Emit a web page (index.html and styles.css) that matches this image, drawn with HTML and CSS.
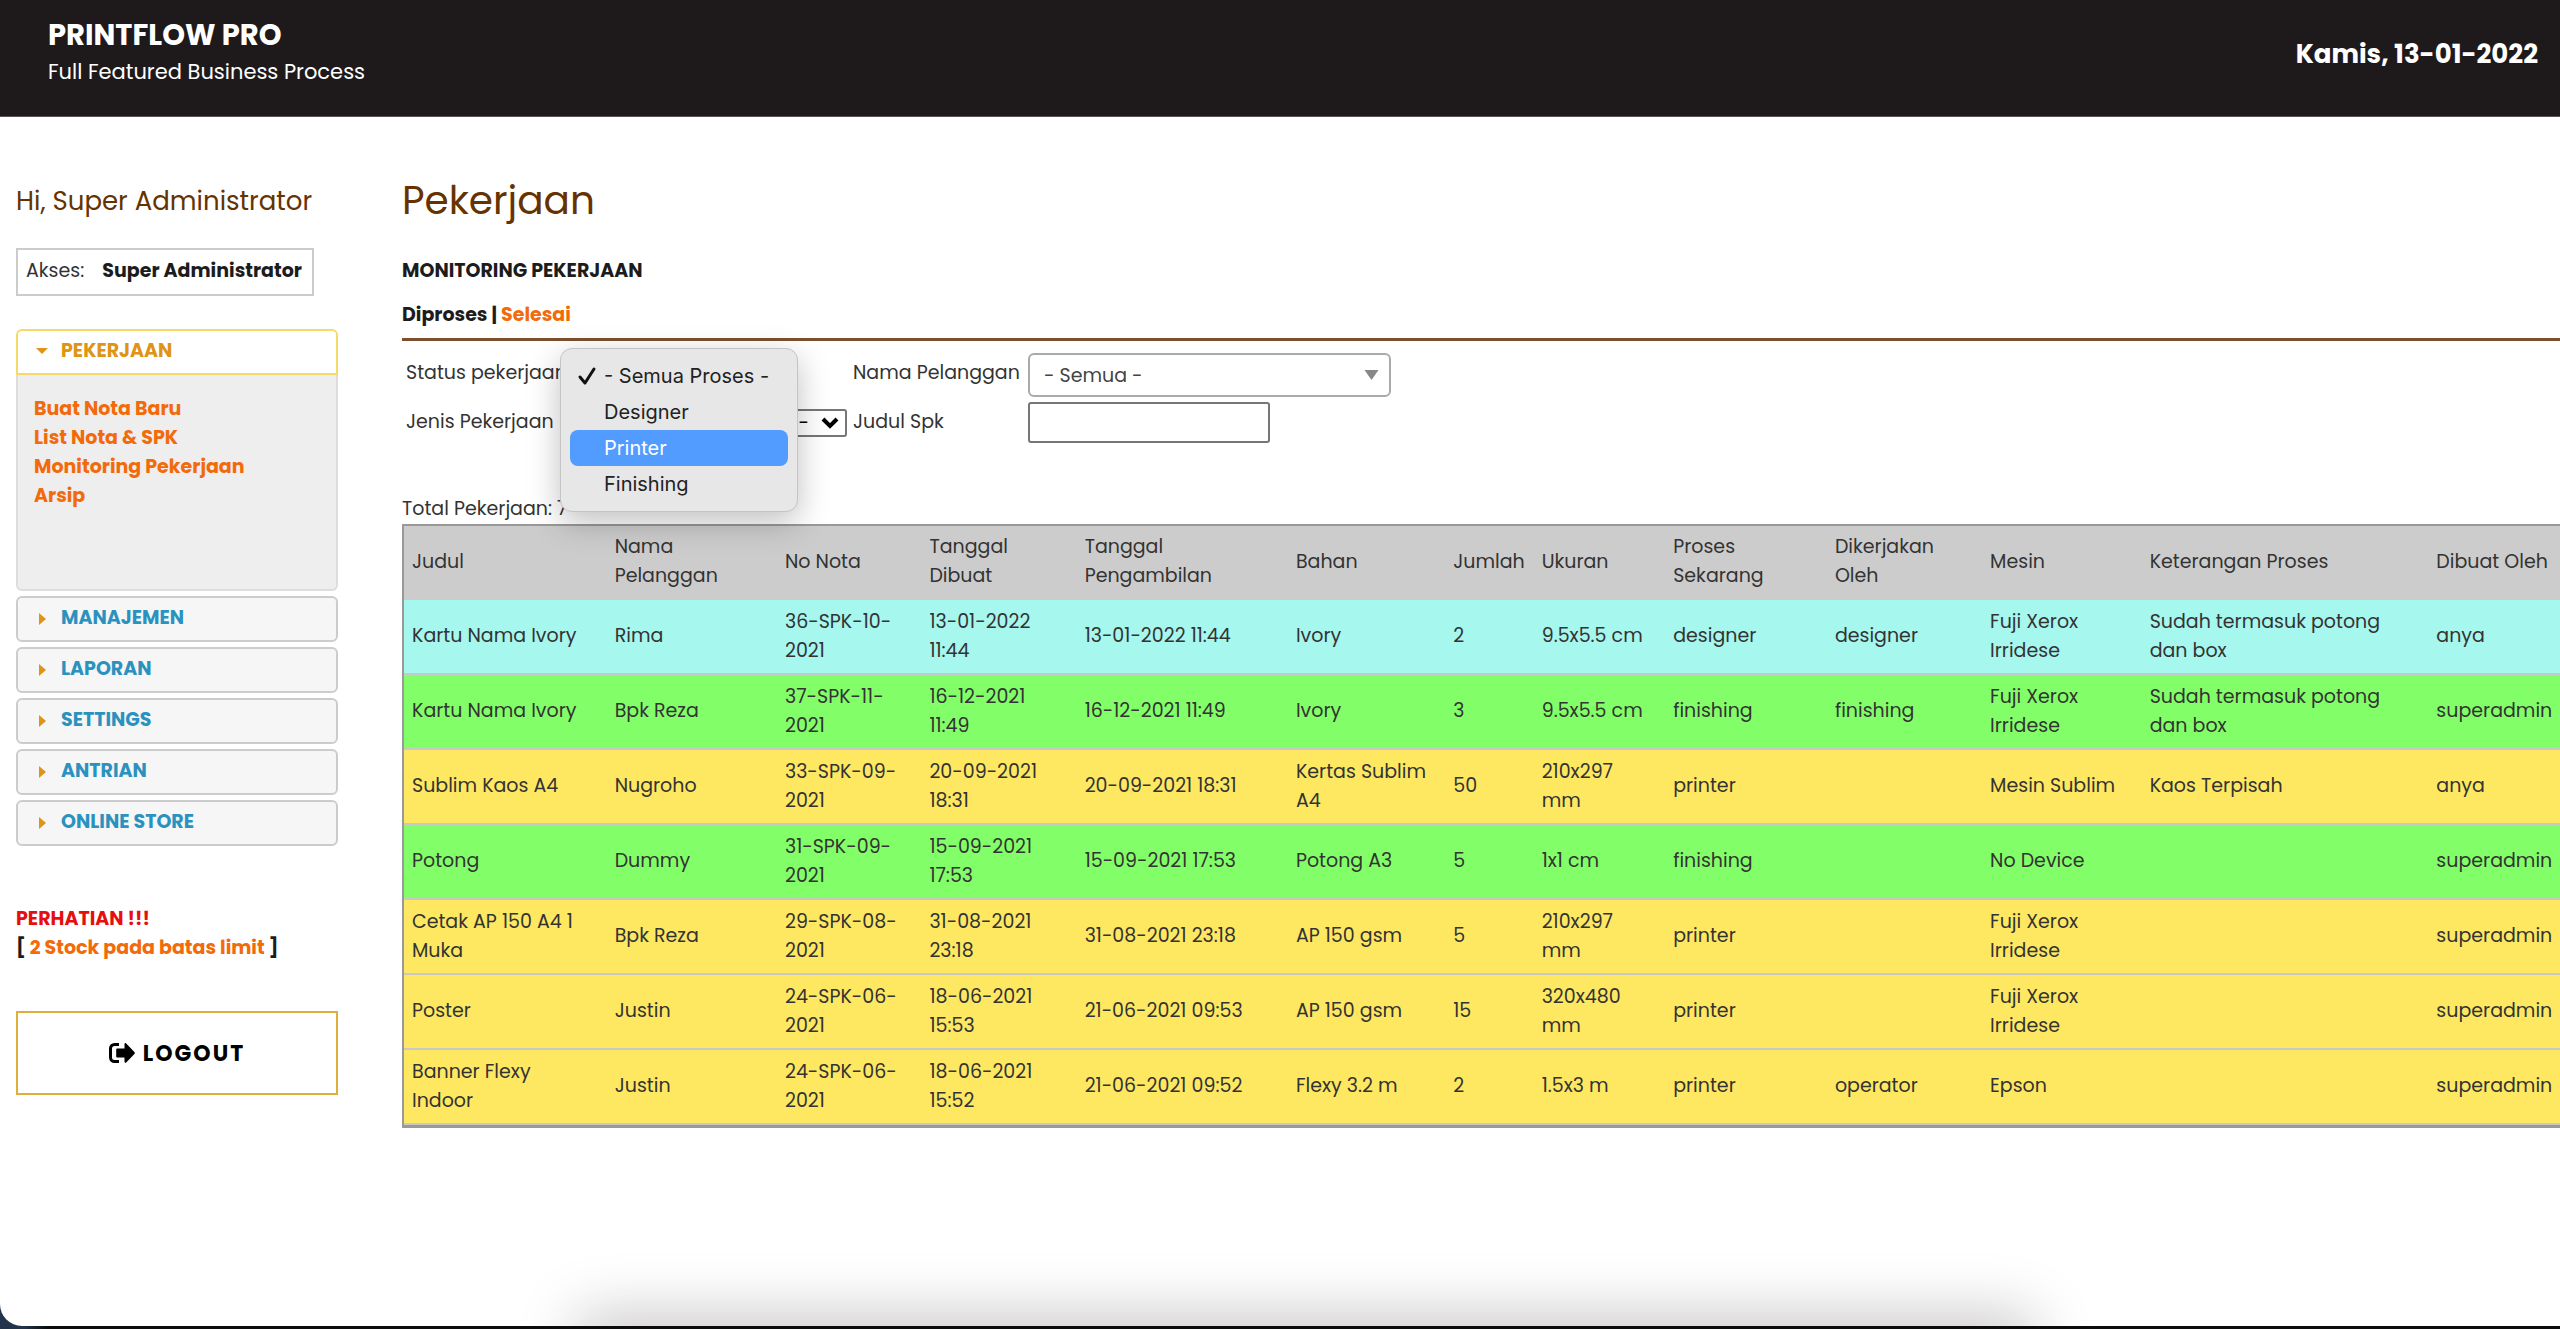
FILE: index.html
```html
<!DOCTYPE html>
<html lang="id">
<head>
<meta charset="utf-8">
<meta name="viewport" content="width=device-width, initial-scale=1">
<title>Printflow Pro - Pekerjaan</title>
<link rel="stylesheet" href="styles.css">
</head>
<body>
<div class="window">
  <header class="topbar">
    <div class="brand">
      <h1 class="brand-name">PRINTFLOW PRO</h1>
      <p class="brand-tagline">Full Featured Business Process</p>
    </div>
    <p class="today">Kamis, 13-01-2022</p>
  </header>

  <div class="layout">
    <aside class="sidebar">
      <h2 class="greeting">Hi, Super Administrator</h2>
      <p class="access">Akses: <strong>Super Administrator</strong></p>

      <nav class="accordion">
        <button class="section section-open" type="button" aria-expanded="true"><svg class="caret" viewBox="0 0 12 12" aria-hidden="true"><path d="M0 3h12L6 9z"/></svg>PEKERJAAN</button>
        <div class="section-body">
          <a href="#">Buat Nota Baru</a>
          <a href="#">List Nota &amp; SPK</a>
          <a href="#">Monitoring Pekerjaan</a>
          <a href="#">Arsip</a>
        </div>
        <button class="section" type="button"><svg class="caret" viewBox="0 0 12 12" aria-hidden="true"><path d="M3 1v12l7-6z"/></svg>MANAJEMEN</button>
        <button class="section" type="button"><svg class="caret" viewBox="0 0 12 12" aria-hidden="true"><path d="M3 1v12l7-6z"/></svg>LAPORAN</button>
        <button class="section" type="button"><svg class="caret" viewBox="0 0 12 12" aria-hidden="true"><path d="M3 1v12l7-6z"/></svg>SETTINGS</button>
        <button class="section" type="button"><svg class="caret" viewBox="0 0 12 12" aria-hidden="true"><path d="M3 1v12l7-6z"/></svg>ANTRIAN</button>
        <button class="section" type="button"><svg class="caret" viewBox="0 0 12 12" aria-hidden="true"><path d="M3 1v12l7-6z"/></svg>ONLINE STORE</button>
      </nav>

      <div class="notice">
        <p class="notice-title">PERHATIAN !!!</p>
        <p>[ <a href="#">2 Stock pada batas limit</a> ]</p>
      </div>

      <button class="logout" type="button"><svg class="logout-icon" viewBox="0 0 26 20" aria-hidden="true"><path d="M10 1.500H5.500a4 4 0 0 0-4 4v9a4 4 0 0 0 4 4H10" fill="none" stroke="#000" stroke-width="3"/><path d="M15.500 1c0-1 1-1.300 1.700-.6l8.200 8.500c.6.600.6 1.400 0 2l-8.200 8.500c-.7.700-1.700.4-1.700-.6v-4.300H8.500c-.8 0-1.300-.5-1.300-1.300V6.800c0-.8.5-1.300 1.300-1.300h7z"/></svg>LOGOUT</button>
    </aside>

    <main class="content">
      <h2 class="page-title">Pekerjaan</h2>
      <h3 class="subtitle">MONITORING PEKERJAAN</h3>
      <p class="tabs">Diproses | <a href="#">Selesai</a></p>

      <form class="filters">
        <label for="status">Status pekerjaan</label>
        <div class="field">
          <select id="status" class="native native-short"><option>- Semua Proses -</option><option>Designer</option><option>Printer</option><option>Finishing</option></select>
          <ul class="menu">
            <li class="menu-item"><svg class="check" viewBox="0 0 20 20" aria-hidden="true"><path d="M3 11l5 6 9-14" fill="none" stroke="#111" stroke-width="3" stroke-linecap="round" stroke-linejoin="round"/></svg>- Semua Proses -</li>
            <li class="menu-item">Designer</li>
            <li class="menu-item menu-item-active">Printer</li>
            <li class="menu-item">Finishing</li>
          </ul>
        </div>
        <label for="pelanggan">Nama Pelanggan</label>
        <div class="field">
          <select id="pelanggan" class="combo"><option>- Semua -</option></select>
          <svg class="combo-arrow" viewBox="0 0 14 10" aria-hidden="true"><path d="M0 0h14L7 10z"/></svg>
        </div>
        <label for="jenis">Jenis Pekerjaan</label>
        <div class="field">
          <select id="jenis" class="native"><option>- Semua -</option></select>
          <svg class="native-arrow" viewBox="0 0 18 12" aria-hidden="true"><path d="M2 2l7 7 7-7" fill="none" stroke="#000" stroke-width="4"/></svg>
        </div>
        <label for="judul">Judul Spk</label>
        <input id="judul" class="text-input" type="text">
      </form>

      <p class="total">Total Pekerjaan: 7</p>
      <table class="jobs">
        <colgroup>
          <col class="c-judul"><col class="c-nama"><col class="c-nota"><col class="c-dibuat"><col class="c-ambil"><col class="c-bahan"><col class="c-jumlah"><col class="c-ukuran"><col class="c-proses"><col class="c-oleh"><col class="c-mesin"><col class="c-ket"><col>
        </colgroup>
        <thead>
          <tr><th>Judul</th><th>Nama<br>Pelanggan</th><th>No Nota</th><th>Tanggal<br>Dibuat</th><th>Tanggal<br>Pengambilan</th><th>Bahan</th><th>Jumlah</th><th>Ukuran</th><th>Proses<br>Sekarang</th><th>Dikerjakan<br>Oleh</th><th>Mesin</th><th>Keterangan Proses</th><th>Dibuat Oleh</th></tr>
        </thead>
        <tbody>
          <tr class="designer"><td>Kartu Nama Ivory</td><td>Rima</td><td>36-SPK-10-<wbr>2021</td><td>13-01-2022<br>11:44</td><td>13-01-2022 11:44</td><td>Ivory</td><td>2</td><td>9.5x5.5 cm</td><td>designer</td><td>designer</td><td>Fuji Xerox Irridese</td><td>Sudah termasuk potong<br>dan box</td><td>anya</td></tr>
          <tr class="finishing"><td>Kartu Nama Ivory</td><td>Bpk Reza</td><td>37-SPK-11-<wbr>2021</td><td>16-12-2021<br>11:49</td><td>16-12-2021 11:49</td><td>Ivory</td><td>3</td><td>9.5x5.5 cm</td><td>finishing</td><td>finishing</td><td>Fuji Xerox Irridese</td><td>Sudah termasuk potong<br>dan box</td><td>superadmin</td></tr>
          <tr class="printer"><td>Sublim Kaos A4</td><td>Nugroho</td><td>33-SPK-09-<wbr>2021</td><td>20-09-2021<br>18:31</td><td>20-09-2021 18:31</td><td>Kertas Sublim A4</td><td>50</td><td>210x297<br>mm</td><td>printer</td><td></td><td>Mesin Sublim</td><td>Kaos Terpisah</td><td>anya</td></tr>
          <tr class="finishing"><td>Potong</td><td>Dummy</td><td>31-SPK-09-<wbr>2021</td><td>15-09-2021<br>17:53</td><td>15-09-2021 17:53</td><td>Potong A3</td><td>5</td><td>1x1 cm</td><td>finishing</td><td></td><td>No Device</td><td></td><td>superadmin</td></tr>
          <tr class="printer"><td>Cetak AP 150 A4 1 Muka</td><td>Bpk Reza</td><td>29-SPK-08-<wbr>2021</td><td>31-08-2021<br>23:18</td><td>31-08-2021 23:18</td><td>AP 150 gsm</td><td>5</td><td>210x297<br>mm</td><td>printer</td><td></td><td>Fuji Xerox Irridese</td><td></td><td>superadmin</td></tr>
          <tr class="printer"><td>Poster</td><td>Justin</td><td>24-SPK-06-<wbr>2021</td><td>18-06-2021<br>15:53</td><td>21-06-2021 09:53</td><td>AP 150 gsm</td><td>15</td><td>320x480<br>mm</td><td>printer</td><td></td><td>Fuji Xerox Irridese</td><td></td><td>superadmin</td></tr>
          <tr class="printer"><td>Banner Flexy<br>Indoor</td><td>Justin</td><td>24-SPK-06-<wbr>2021</td><td>18-06-2021<br>15:52</td><td>21-06-2021 09:52</td><td>Flexy 3.2 m</td><td>2</td><td>1.5x3 m</td><td>printer</td><td>operator</td><td>Epson</td><td></td><td>superadmin</td></tr>
        </tbody>
      </table>
    </main>
  </div>
  <div class="dock-shadow"></div>
</div>
</body>
</html>
```
FILE: styles.css
```css
* { box-sizing: border-box; }

body {
  margin: 0;
  background: linear-gradient(90deg, #22344c 24px, #0c0c0c 48px);
  color: #333;
  font: 19px/29px Poppins, Inter, "Open Sans", sans-serif;
}

h1, h2, h3, p, ul { margin: 0; padding: 0; }
a { color: #f26a0a; text-decoration: none; }
button, input, select { font: inherit; }

.window {
  position: relative;
  min-height: calc(100vh - 3px);
  background: #fff;
  border-bottom-left-radius: 22px;
  overflow: hidden;
}

/* top bar */
.topbar {
  display: flex;
  justify-content: space-between;
  align-items: flex-start;
  height: 117px;
  padding: 16px 22px 0 48px;
  background: #1e1a1b;
  border-bottom: 1px solid #555;
  color: #fff;
}
.brand-name { font-size: 29px; line-height: 38px; font-weight: 700; }
.brand-tagline { font-size: 21px; line-height: 36px; }
.today { font-size: 26px; line-height: 38px; font-weight: 700; padding-top: 19px; }

.layout {
  display: grid;
  grid-template-columns: 322px minmax(0, 1fr);
  column-gap: 64px;
  padding: 60px 0 0 16px;
}

/* sidebar */
.greeting { font-size: 26px; line-height: 48px; font-weight: 400; color: #663300; }
.access {
  width: max-content;
  height: 48px;
  margin-top: 23px;
  padding: 6px 10px 6px 8px;
  border: 2px solid #ccc;
}
.access strong { margin-left: 13px; color: #1c1c1c; }

.accordion { display: flex; flex-direction: column; gap: 5px; margin-top: 33px; }
.section {
  display: flex;
  align-items: center;
  gap: 13px;
  height: 46px;
  padding: 0 18px 3px;
  border: 2px solid #ccc;
  border-radius: 6px;
  background: #f6f6f6;
  color: #2b92bf;
  font-weight: 700;
  text-align: left;
}
.section-open {
  margin-bottom: -5px;
  border-color: #f5da6a;
  border-radius: 6px 6px 0 0;
  background: #fff;
  color: #de9414;
}
.caret { width: 12px; height: 12px; fill: #de9414; overflow: visible; }
.section-body {
  display: flex;
  flex-direction: column;
  height: 216px;
  padding: 19px 16px;
  border: 2px solid #ddd;
  border-top: 0;
  border-radius: 0 0 6px 6px;
  background: #eee;
  font-weight: 700;
}

.notice { margin-top: 58px; font-weight: 700; color: #1c1c1c; }
.notice-title { color: #e60f0f; }

.logout {
  display: flex;
  justify-content: center;
  align-items: center;
  gap: 8px;
  width: 100%;
  height: 84px;
  margin-top: 49px;
  border: 2px solid #e0ae3a;
  background: #fff;
  color: #000;
  font-size: 22px;
  font-weight: 700;
  letter-spacing: 2px;
}
.logout-icon { width: 26px; height: 20px; }

/* content */
.page-title { font-size: 39px; line-height: 48px; font-weight: 400; color: #663300; }
.subtitle { margin-top: 31px; font-size: 19px; line-height: 29px; color: #1c1c1c; }
.tabs {
  margin-top: 15px;
  padding-bottom: 8px;
  border-bottom: 3px solid #7d4f2c;
  font-weight: 700;
  line-height: 30px;
  color: #1c1c1c;
}

.filters {
  display: grid;
  grid-template-columns: 152px 283px 169px 363px;
  grid-template-rows: 44px 41px;
  gap: 5px 6px;
  margin-top: 12px;
  padding-left: 4px;
}
.filters label { padding-top: 5px; white-space: nowrap; }
.field { position: relative; display: flex; align-items: center; }
.native {
  width: 100%;
  height: 28px;
  padding: 0 36px 0 4px;
  border: 2px solid #767676;
  border-radius: 3px;
  background: #fff;
  color: #000;
  appearance: none;
  line-height: 22px;
  text-align-last: right;
}
.native-short { width: 220px; }
.native-arrow { position: absolute; right: 8px; width: 18px; height: 12px; }
.combo {
  width: 100%;
  height: 44px;
  padding: 0 14px;
  border: 2px solid #aaa;
  border-radius: 6px;
  background: #fff;
  color: #444;
  appearance: none;
}
.combo-arrow { position: absolute; right: 12px; width: 15px; height: 10px; fill: #888; }
.text-input { width: 242px; height: 41px; border: 2px solid #767676; border-radius: 3px; }

.menu {
  position: absolute;
  z-index: 2;
  top: -5px;
  left: -4px;
  width: 238px;
  padding: 9px;
  border: 1px solid #c4c4c4;
  border-radius: 12px;
  background: #e7e7e7;
  box-shadow: 0 10px 32px rgba(0, 0, 0, .25);
  color: #222;
  font-family: Inter, sans-serif;
  font-size: 20px;
  line-height: 36px;
  list-style: none;
}
.menu-item { position: relative; padding-left: 34px; border-radius: 8px; white-space: nowrap; }
.menu-item-active { background: #529bff; color: #fff; }
.check { position: absolute; left: 7px; top: 8px; width: 20px; height: 20px; }

.total { margin-top: 51px; }
.jobs {
  width: 100%;
  margin-top: 1px;
  border: 2px solid #999;
  border-right: 0;
  border-bottom-width: 3px;
  border-collapse: separate;
  border-spacing: 0;
  table-layout: fixed;
}
.jobs th, .jobs td {
  height: 75px;
  padding: 0 4px 0 8px;
  font-weight: 400;
  text-align: left;
  vertical-align: middle;
}
.jobs th { height: 74px; padding-bottom: 4px; }
.jobs td { padding-bottom: 2px; border-bottom: 2px solid #c8c8c8; }
.jobs thead { background: #ccc; }
.designer { background: #a6f7ee; }
.finishing { background: #82ff68; }
.printer { background: #fee862; }
.c-judul { width: 9.4%; }
.c-nama { width: 7.9%; }
.c-nota { width: 6.7%; }
.c-dibuat { width: 7.2%; }
.c-ambil { width: 9.8%; }
.c-bahan { width: 7.3%; }
.c-jumlah { width: 4.1%; }
.c-ukuran { width: 6.1%; }
.c-proses { width: 7.5%; }
.c-oleh { width: 7.2%; }
.c-mesin { width: 7.4%; }
.c-ket { width: 13.3%; }

/* soft shade cast by the dock below the window */
.dock-shadow {
  position: absolute;
  bottom: -40px;
  left: 23%;
  right: 21%;
  height: 40px;
  box-shadow: 0 0 60px 10px rgba(30, 20, 20, .25);
}
```
